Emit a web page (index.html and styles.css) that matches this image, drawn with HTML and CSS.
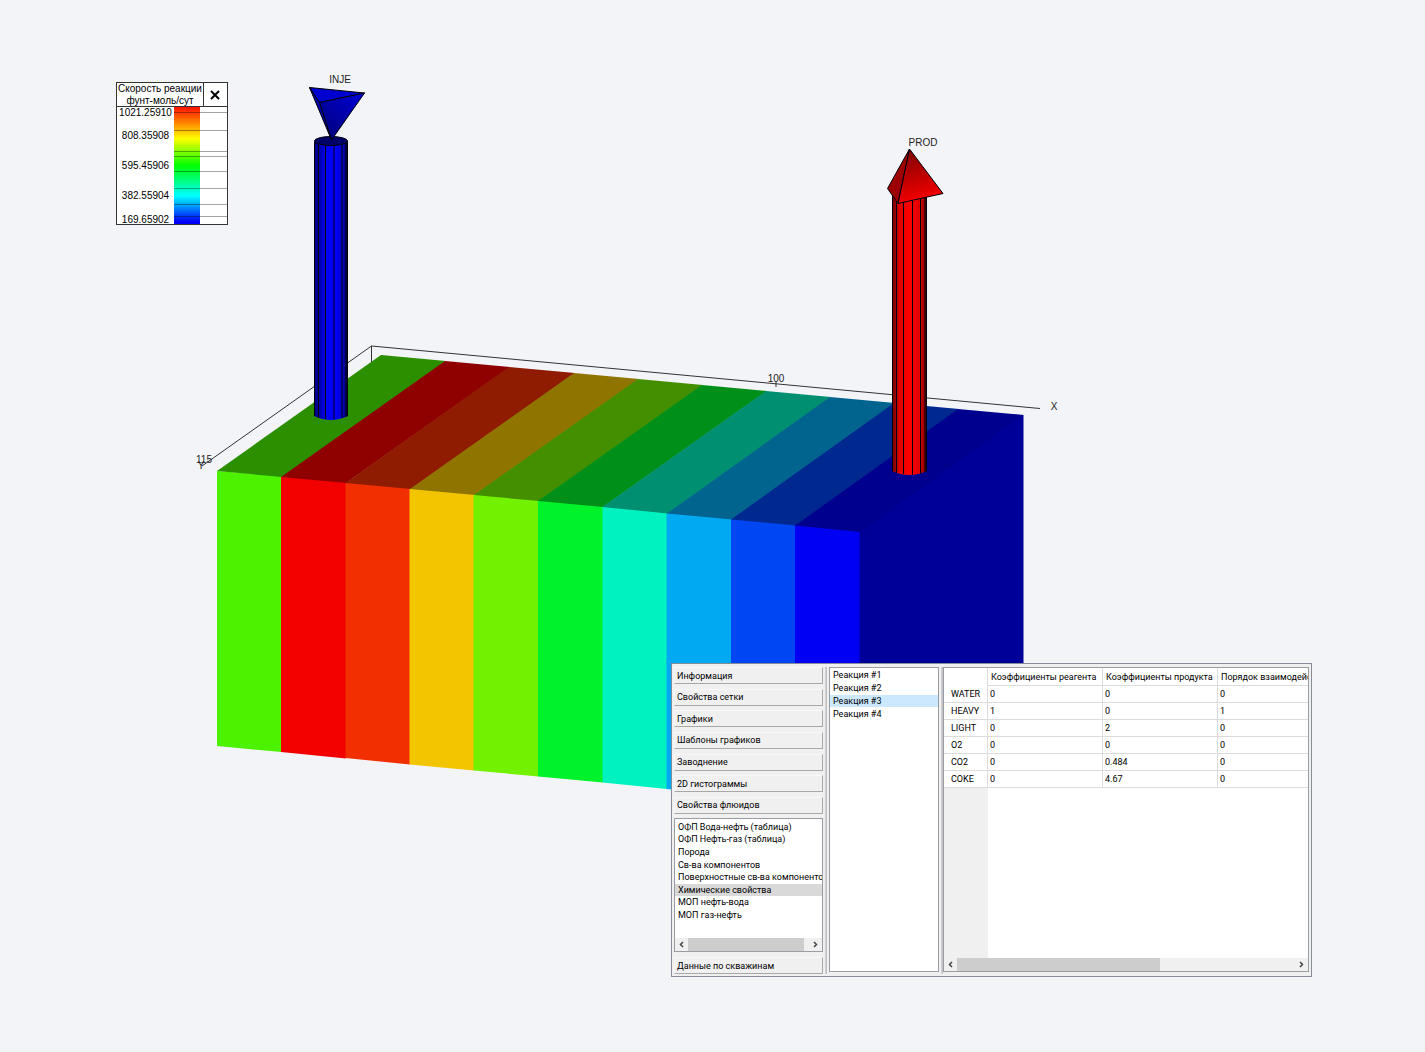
FILE: index.html
```html
<!DOCTYPE html>
<html lang="ru">
<head>
<meta charset="utf-8">
<meta name="viewport" content="width=device-width, initial-scale=1">
<title>Скорость реакции</title>
<link rel="stylesheet" href="styles.css">
</head>
<body>
<main class="stage">
  <svg class="scene" viewBox="0 0 1425 1052" role="img" aria-label="INJE, PROD">
    <defs>
      <linearGradient id="blue-pipe">
        <stop offset="0" stop-color="#000078"/><stop offset=".14" stop-color="#0000a8"/>
        <stop offset=".35" stop-color="#0000f0"/><stop offset=".65" stop-color="#0000fa"/>
        <stop offset=".85" stop-color="#0000c0"/><stop offset="1" stop-color="#000048"/>
      </linearGradient>
      <linearGradient id="red-pipe">
        <stop offset="0" stop-color="#780000"/><stop offset=".12" stop-color="#a00000"/>
        <stop offset=".2" stop-color="#e00000"/><stop offset=".5" stop-color="#ff0000"/>
        <stop offset=".8" stop-color="#e00000"/><stop offset="1" stop-color="#600000"/>
      </linearGradient>
      <linearGradient id="red-cone" x1="0" y1="0" x2=".2" y2="1">
        <stop offset="0" stop-color="#780000"/><stop offset="1" stop-color="#f40000"/>
      </linearGradient>
      <linearGradient id="blue-cone" x1="1" y1="0" x2=".3" y2="1">
        <stop offset="0" stop-color="#0000d8"/><stop offset="1" stop-color="#000080"/>
      </linearGradient>
    </defs>

    <path class="axis" d="M371.5 362V346L1040 408.500M371.500 346L202 466"/>

    <g class="front">
      <path fill="#4cf200" d="M217 471L281.500 476V752L217 746z"/>
      <path fill="#f20000" d="M281 476L346 482V758.500L281 752z"/>
      <path fill="#f22f00" d="M345.500 482L410 488V764.500L345.500 758z"/>
      <path fill="#f2c500" d="M409.500 488L474 494V770.500L409.500 764.500z"/>
      <path fill="#72f200" d="M473.500 494L538.500 500V776.500L473.500 770.500z"/>
      <path fill="#00f22a" d="M538 500L603 506V782.500L538 776.500z"/>
      <path fill="#00f2c0" d="M602.500 506L667 512V789L602.500 782.500z"/>
      <path fill="#00a9f2" d="M666.500 512L731 518V795L666.500 789z"/>
      <path fill="#0046f2" d="M731 518L795.500 524V801L731 795z"/>
      <path fill="#0000f2" d="M795 524L860 530V807L795 801z"/>
      <path fill="#000099" d="M859.500 525L1010 414.500L1023.500 415V690L859.500 807z"/>
    </g>
    <g class="top">
      <path fill="#2c8f00" d="M217 471L381 355L446 361L282 477z"/>
      <path fill="#8f0000" d="M281 477L445 361L510 367L346 483z"/>
      <path fill="#8f1c00" d="M345.500 483L509 367L575 373L411 489z"/>
      <path fill="#8f7500" d="M410 489L574 373L639 379L475 495z"/>
      <path fill="#448f00" d="M474 495L638 379L703 385L539 501z"/>
      <path fill="#008f19" d="M538 501L702 385L767 391L603 507z"/>
      <path fill="#008f71" d="M602.500 507L766 391L831 397L668 513.500z"/>
      <path fill="#00648f" d="M667 513.500L830 397L895 403L732 519.500z"/>
      <path fill="#00298f" d="M731 519.500L894 403L959 409L796 525.500z"/>
      <path fill="#00008f" d="M795 525.500L958 409L1023 415L860 532z"/>
    </g>

    <path class="axis" d="M776 382V387"/>

    <g class="well">
      <path fill="url(#blue-pipe)" stroke="none" d="M314 141H348V416Q331 424 314 416z"/>
      <path d="M314.500 141V416M318.500 143V418M325.500 145V419M334 145V419M342 144V418M346 143V417M347.500 141V416"/>
      <ellipse fill="#000068" cx="331" cy="141" rx="16.500" ry="4.500"/>
      <path fill="#0000d0" d="M309.500 87.500L364.500 93L319.500 102.500z"/>
      <path fill="url(#blue-cone)" d="M319.500 102.500L364.500 93L331.500 140z"/>
      <path fill="#0000a8" d="M309.500 87.500L319.500 102.500L331.500 140z"/>
    </g>
    <g class="well">
      <path fill="url(#red-pipe)" stroke="none" d="M892 196H927V471Q909 479 892 471z"/>
      <path d="M892.500 196V471M896.500 196V473M903.500 196V474M912.500 196V475M920.500 196V474M925 196V472M926.500 196V471"/>
      <path fill="#9c0000" d="M909.500 149L887.500 188.500L898 203.500z"/>
      <path fill="url(#red-cone)" d="M909.500 149L943 193.500L898 203.500z"/>
    </g>

    <g class="labels">
      <text x="340" y="83">INJE</text>
      <text x="923" y="146">PROD</text>
      <text x="776" y="382">100</text>
      <text x="204" y="463">115</text>
      <text x="201" y="469">Y</text>
      <text x="1054" y="410">X</text>
    </g>
  </svg>

  <section class="legend">
    <header class="legend-head">
      <h1 class="legend-title">Скорость реакции фунт-моль/сут</h1>
      <button class="legend-close" type="button" aria-label="Закрыть">
        <svg width="10" height="10" viewBox="0 0 10 10"><path d="M1 1L9 9M9 1L1 9" stroke="#000" stroke-width="2"/></svg>
      </button>
    </header>
    <div class="legend-body">
      <div class="legend-values">
        <span>1021.25910</span><span>808.35908</span><span>595.45906</span><span>382.55904</span><span>169.65902</span>
      </div>
      <div class="legend-bar"></div>
      <svg class="legend-ticks" viewBox="0 0 53 117" preserveAspectRatio="none">
        <path d="M0 5.500H53M0 23.500H53M0 44.500H53M0 49.500H53M0 64.500H53M0 81.500H53M0 97.500H53M0 109.500H53"/>
      </svg>
    </div>
  </section>

  <section class="panel">
    <nav class="side">
      <button class="tab" type="button">Информация</button>
      <button class="tab" type="button">Свойства сетки</button>
      <button class="tab" type="button">Графики</button>
      <button class="tab" type="button">Шаблоны графиков</button>
      <button class="tab" type="button">Заводнение</button>
      <button class="tab" type="button">2D гистограммы</button>
      <button class="tab" type="button">Свойства флюидов</button>
      <div class="box side-box">
        <ul class="list list-long">
          <li><button class="item" type="button">ОФП Вода-нефть (таблица)</button></li>
          <li><button class="item" type="button">ОФП Нефть-газ (таблица)</button></li>
          <li><button class="item" type="button">Порода</button></li>
          <li><button class="item" type="button">Св-ва компонентов</button></li>
          <li><button class="item" type="button">Поверхностные св-ва компонентов</button></li>
          <li><button class="item item-current" type="button">Химические свойства</button></li>
          <li><button class="item" type="button">МОП нефть-вода</button></li>
          <li><button class="item" type="button">МОП газ-нефть</button></li>
        </ul>
        <div class="scroll">
          <button class="arrow" type="button" aria-label="Влево"><svg width="5" height="7" viewBox="0 0 5 7"><path d="M4 1L1.500 3.500L4 6"/></svg></button>
          <div class="track"><div class="thumb thumb-side"></div></div>
          <button class="arrow" type="button" aria-label="Вправо"><svg width="5" height="7" viewBox="0 0 5 7"><path d="M1 1L3.500 3.500L1 6"/></svg></button>
        </div>
      </div>
      <button class="tab" type="button">Данные по скважинам</button>
    </nav>
    <div class="splitter"></div>
    <div class="box reactions">
      <ul class="list list-short">
        <li><button class="item" type="button">Реакция #1</button></li>
        <li><button class="item" type="button">Реакция #2</button></li>
        <li><button class="item item-selected" type="button">Реакция #3</button></li>
        <li><button class="item" type="button">Реакция #4</button></li>
      </ul>
    </div>
    <div class="splitter"></div>
    <div class="box data">
      <div class="data-view">
        <table class="grid">
          <colgroup><col class="col-name"><col class="col-value"><col class="col-value"><col class="col-value"></colgroup>
          <thead>
            <tr><td></td><th scope="col">Коэффициенты реагента</th><th scope="col">Коэффициенты продукта</th><th scope="col">Порядок взаимодействия</th></tr>
          </thead>
          <tbody>
            <tr><th scope="row">WATER</th><td>0</td><td>0</td><td>0</td></tr>
            <tr><th scope="row">HEAVY</th><td>1</td><td>0</td><td>1</td></tr>
            <tr><th scope="row">LIGHT</th><td>0</td><td>2</td><td>0</td></tr>
            <tr><th scope="row">O2</th><td>0</td><td>0</td><td>0</td></tr>
            <tr><th scope="row">CO2</th><td>0</td><td>0.484</td><td>0</td></tr>
            <tr><th scope="row">COKE</th><td>0</td><td>4.67</td><td>0</td></tr>
          </tbody>
        </table>
      </div>
      <div class="scroll">
        <button class="arrow" type="button" aria-label="Влево"><svg width="5" height="7" viewBox="0 0 5 7"><path d="M4 1L1.500 3.500L4 6"/></svg></button>
        <div class="track"><div class="thumb thumb-data"></div></div>
        <button class="arrow" type="button" aria-label="Вправо"><svg width="5" height="7" viewBox="0 0 5 7"><path d="M1 1L3.500 3.500L1 6"/></svg></button>
      </div>
    </div>
  </section>
</main>
</body>
</html>
```
FILE: styles.css
```css
* { box-sizing: border-box; }
body { margin: 0; background: #f3f4f8; color: #000; font: 9px/12px Roboto, "Noto Sans", sans-serif; }
button { font: inherit; color: inherit; border: 0; padding: 0; background: none; text-align: left; }
ul { list-style: none; margin: 0; padding: 0; }

.stage { position: relative; min-height: 100vh; overflow: hidden; }
.scene { display: block; width: 100%; height: auto; }
.axis { fill: none; stroke: #333; }
.well { stroke: #00000b; stroke-width: 1; stroke-linejoin: round; }
.labels { font: 10px "Liberation Sans", sans-serif; fill: #222; text-anchor: middle; }

/* colour scale */
.legend { position: absolute; left: 116px; top: 82px; width: 112px; border: 1px solid #333; background: #fff; font: 10px/10px "Liberation Sans", sans-serif; }
.legend-head { display: flex; height: 24px; border-bottom: 1px solid #333; }
.legend-title { flex: 1; margin: 0; font: inherit; line-height: 12px; text-align: center; }
.legend-close { width: 24px; display: grid; place-items: center; padding-right: 2px; border-left: 1px solid #333; }
.legend-body { display: grid; grid-template-columns: 57px 26px 1fr; height: 117px; }
.legend-values { grid-area: 1 / 1; display: grid; grid-template-rows: 14px 30px 30px 30px 13px; justify-items: center; align-items: center; line-height: 12px; }
.legend-values :first-child { align-self: start; }
.legend-values :last-child { align-self: end; line-height: 8px; }
.legend-bar { grid-area: 1 / 2; background: linear-gradient(#f10 0%, #f80 14%, #ff0 27%, #0f0 50%, #0ff 76%, #0000f8 98%); }
.legend-ticks { grid-area: 1 / 2 / 2 / 4; width: 100%; height: 100%; }
.legend-ticks path { stroke: #000; stroke-opacity: .35; }

/* property window */
.panel { position: absolute; left: 671px; top: 663px; width: 641px; height: 314px; display: flex; gap: 2px; padding: 3px 2px 2px; border: 1px solid #888b98; background: #f0f0f0; }
.side { width: 149px; display: flex; flex-direction: column; justify-content: space-between; }
.tab { flex: none; height: 17px; padding: 0 2px; white-space: nowrap; border: 1px solid #f8f8f8; border-right-color: #a8a8a8; border-bottom-color: #a8a8a8; line-height: 14px; }
.splitter { width: 2px; border-left: 1px solid #d0d0d0; border-right: 1px solid #c0c0c4; }
.box { display: flex; flex-direction: column; justify-content: space-between; border: 1px solid #9a9ca4; background: #fff; overflow: hidden; }
.side-box { height: 134px; }
.reactions { width: 110px; margin-bottom: 2px; }
.data { flex: 1; min-width: 0; margin: 0 0 2px -2px; }
.list { display: grid; grid-auto-rows: 1fr; margin-top: 1px; }
.list-long { height: 101px; }
.list-short { height: 51px; }
.list li { display: flex; min-width: 0; }
.item { flex: 1; padding: 0 3px; white-space: nowrap; }
.item-current { background: #d9d9d9; }
.item-selected { background: #cce8ff; }

.scroll { flex: none; display: flex; height: 13px; background: #f0f0f0; }
.arrow { width: 13px; display: grid; place-items: center; }
.arrow path { fill: none; stroke: #444; stroke-width: 1.500; }
.track { flex: 1; }
.thumb { height: 100%; background: #cdcdcd; }
.thumb-side { width: 96%; }
.thumb-data { width: 60%; }

.data-view { flex: 1; overflow: hidden; background: linear-gradient(90deg, #f0f0f0 44px, #fff 44px); }
.grid { table-layout: fixed; width: 389px; border-collapse: separate; border-spacing: 0; background: #fff; }
.grid tr { height: 17px; }
.grid thead tr { height: 18px; }
.col-name { width: 44px; }
.col-value { width: 115px; }
.grid th, .grid td { padding: 0 2px; border-right: 1px solid #dcdcdc; border-bottom: 1px solid #dcdcdc; font-weight: normal; text-align: left; white-space: nowrap; }
.grid thead th { padding-left: 3px; }
.grid thead td { border-bottom-color: #fff; }
.grid tbody th { padding-left: 7px; }
```
